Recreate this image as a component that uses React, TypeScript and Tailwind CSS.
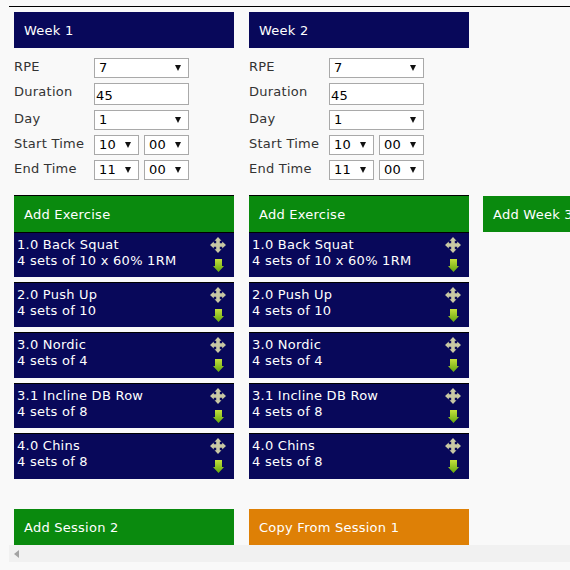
import React from 'react';

const EXERCISES = [
  { name: '1.0 Back Squat', sets: '4 sets of 10 x 60% 1RM', h: 'h-[45px]', mb: 'mb-[5px]' },
  { name: '2.0 Push Up', sets: '4 sets of 10', h: 'h-[45px]', mb: 'mb-[5px]' },
  { name: '3.0 Nordic', sets: '4 sets of 4', h: 'h-[46px]', mb: 'mb-[5px]' },
  { name: '3.1 Incline DB Row', sets: '4 sets of 8', h: 'h-[45px]', mb: 'mb-[5px]' },
  { name: '4.0 Chins', sets: '4 sets of 8', h: 'h-[46px]', mb: '' },
];

function MoveIcon(): React.ReactElement {
  return (
    <svg width="16" height="16" viewBox="0 0 16 16" aria-hidden="true">
      <path
        d="M8 0 L11.5 3.8 L9.8 3.8 L9.8 6.2 L12.2 6.2 L12.2 4.5 L16 8 L12.2 11.5 L12.2 9.8 L9.8 9.8 L9.8 12.2 L11.5 12.2 L8 16 L4.5 12.2 L6.2 12.2 L6.2 9.8 L3.8 9.8 L3.8 11.5 L0 8 L3.8 4.5 L3.8 6.2 L6.2 6.2 L6.2 3.8 L4.5 3.8 Z"
        fill="#c9c9a4"
      />
    </svg>
  );
}

function DownIcon(): React.ReactElement {
  return (
    <svg width="11" height="13" viewBox="0 0 11 13" aria-hidden="true">
      <defs>
        <linearGradient id="down-grad" x1="0" y1="0" x2="0" y2="1">
          <stop offset="0" stopColor="#c4e03c" />
          <stop offset="1" stopColor="#64a80e" />
        </linearGradient>
      </defs>
      <path d="M2 0 H9 V7 H11 L5.5 13 L0 7 H2 Z" fill="url(#down-grad)" />
    </svg>
  );
}

function Select({ value, className }: { value: string; className: string }): React.ReactElement {
  return (
    <div className={`relative h-5 bg-white border border-[#a9a9a9] ${className}`}>
      <span className="absolute left-[4px] top-0 text-[13px] tracking-[0.25px] leading-[18px] text-black">{value}</span>
      <svg className="absolute right-[7px] top-[6px]" width="6" height="6" viewBox="0 0 6 6" aria-hidden="true">
        <path d="M0 0 H6 L3 6 Z" fill="#111" />
      </svg>
    </div>
  );
}

function Row({ label, children, h }: { label: string; children: React.ReactNode; h: string }): React.ReactElement {
  return (
    <div className={`flex ${h}`}>
      <div className="w-[80px] pt-[1px] text-[13px] tracking-[0.25px] leading-[16px] text-[#333]">{label}</div>
      {children}
    </div>
  );
}

function Week({ title }: { title: string }): React.ReactElement {
  return (
    <div className="w-[220px] shrink-0">
      <div className="h-9 bg-[#08085a] text-white text-[13px] tracking-[0.25px] leading-[38px] pl-[10px]">{title}</div>

      <div className="mt-[10px] h-[137px]">
        <Row label="RPE" h="h-[25px]">
          <Select value="7" className="w-[95px]" />
        </Row>
        <Row label="Duration" h="h-[27px]">
          <div className="h-[22px] w-[95px] bg-white border border-[#a9a9a9] pl-[1px] text-[13px] tracking-[0.25px] leading-[24px] text-black">45</div>
        </Row>
        <Row label="Day" h="h-[25px]">
          <Select value="1" className="w-[95px]" />
        </Row>
        <Row label="Start Time" h="h-[25px]">
          <div className="flex gap-[5px]">
            <Select value="10" className="w-[45px]" />
            <Select value="00" className="w-[45px]" />
          </div>
        </Row>
        <Row label="End Time" h="h-[25px]">
          <div className="flex gap-[5px]">
            <Select value="11" className="w-[45px]" />
            <Select value="00" className="w-[45px]" />
          </div>
        </Row>
      </div>

      <div className="h-[37px] bg-[#0a8a0e] border-t border-black text-white text-[13px] tracking-[0.25px] leading-[38px] pl-[10px]">Add Exercise</div>

      {EXERCISES.map((ex) => (
        <div key={ex.name} className={`flex justify-between bg-[#08085a] border-t border-black pl-[3px] pr-[8px] pt-[4px] text-white text-[13px] tracking-[0.25px] leading-[16px] ${ex.h} ${ex.mb}`}>
          <div>
            <div>{ex.name}</div>
            <div>{ex.sets}</div>
          </div>
          <div className="flex flex-col items-center w-4 gap-[6px]">
            <MoveIcon />
            <DownIcon />
          </div>
        </div>
      ))}
    </div>
  );
}

export default function App(): React.ReactElement {
  return (
    <div className="w-[570px] h-[570px] overflow-hidden bg-[#f9f9f9] font-['DejaVu_Sans',Verdana,sans-serif] pt-[6px] pl-[9px]">
      <div className="border-t border-black pl-[5px] pt-[5px] w-[561px]">
        <div className="flex gap-[15px] w-[600px]">
          <Week title="Week 1" />
          <Week title="Week 2" />
          <div className="-ml-px">
            <div className="mt-[184px] h-9 w-[120px] bg-[#0a8a0e] text-white text-[13px] tracking-[0.25px] leading-[38px] pl-[10px] whitespace-nowrap">Add Week 3</div>
          </div>
        </div>
        <div className="flex gap-[15px] mt-[30px]">
          <div className="w-[220px] h-9 bg-[#0a8a0e] text-white text-[13px] tracking-[0.25px] leading-[38px] pl-[10px]">Add Session 2</div>
          <div className="w-[220px] h-9 bg-[#de8006] text-white text-[13px] tracking-[0.25px] leading-[38px] pl-[10px]">Copy From Session 1</div>
        </div>
      </div>
      <div className="flex items-center h-[17px] w-[561px] bg-[#f1f1f1] pl-[5px]">
        <svg width="6" height="8" viewBox="0 0 6 8" aria-hidden="true">
          <path d="M5 0 V8 L0 4 Z" fill="#a3a3a3" />
        </svg>
      </div>
    </div>
  );
}
